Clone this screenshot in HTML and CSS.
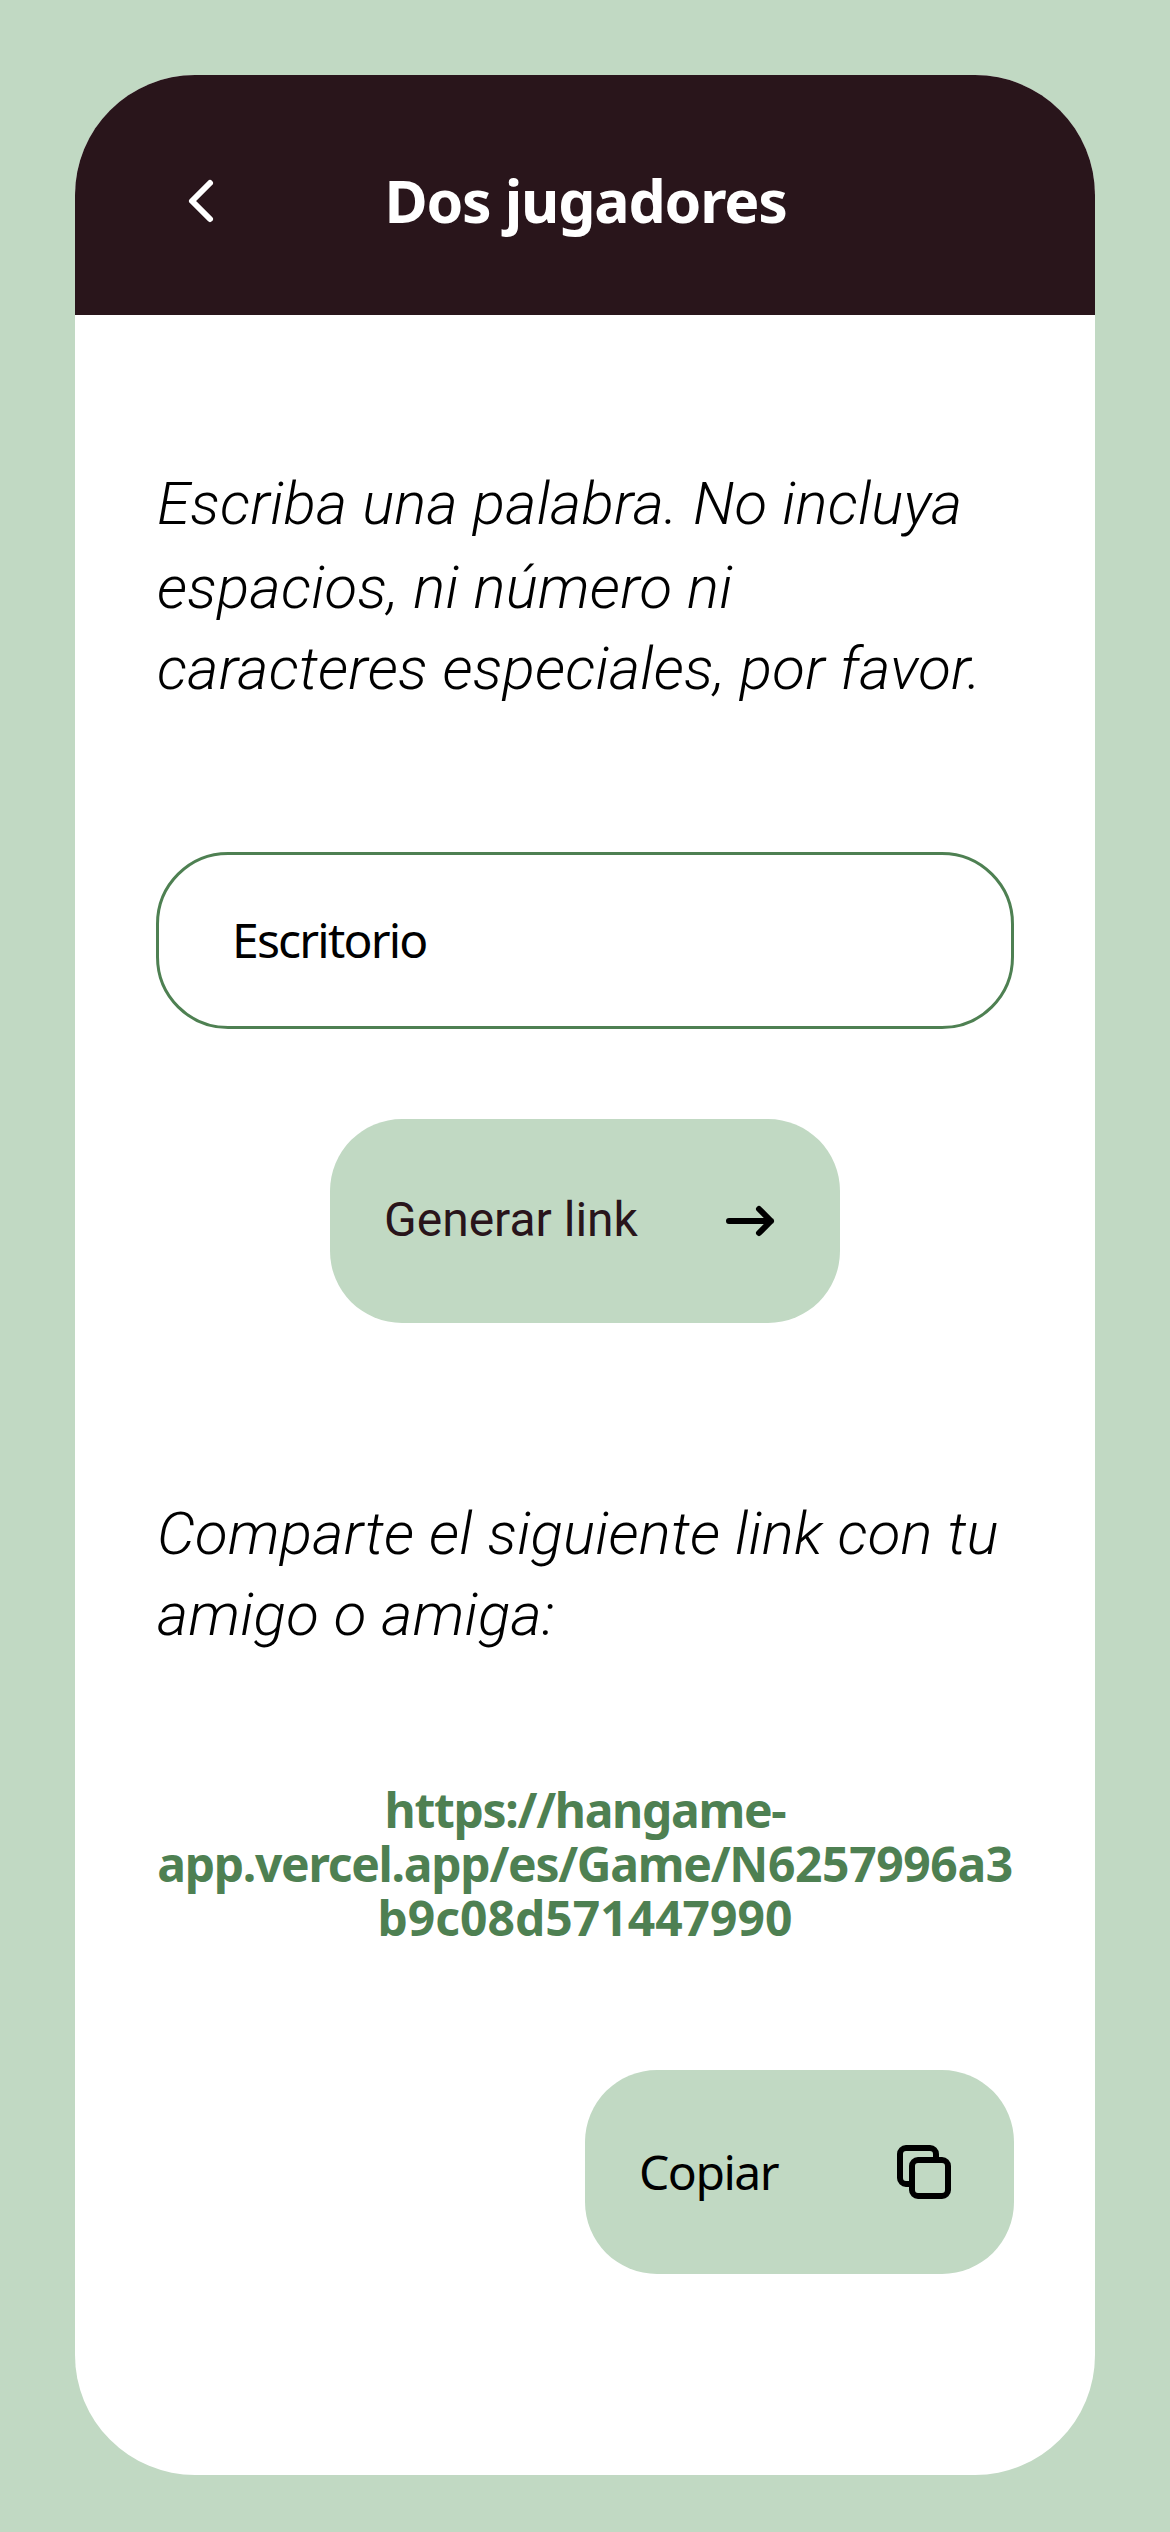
FILE: index.html
```html
<!DOCTYPE html>
<html lang="es">
<head>
<meta charset="utf-8">
<title>Dos jugadores</title>
<link rel="stylesheet" href="styles.css">
</head>
<body>
<main class="card">
  <header class="header">
    <svg class="icon back" viewBox="0 0 24 24"><path d="M15 6l-6 6l6 6"/></svg>
    <h1 class="title">Dos jugadores</h1>
  </header>
  <section class="content">
    <p class="hint hint-word"><span class="line line-tall">Escriba una palabra. No incluya</span> <span class="line">espacios, ni número ni</span> <span class="line">caracteres especiales, por favor.</span></p>
    <div class="field"><span class="field-text">Escritorio</span></div>
    <button class="button generate"><span class="generate-text">Generar link</span>
      <svg class="icon" viewBox="0 0 24 24"><path d="M5 12h14M15 16l4-4M15 8l4 4"/></svg>
    </button>
    <p class="hint hint-share"><span class="line">Comparte el siguiente link con tu</span> <span class="line">amigo o amiga:</span></p>
    <p class="link"><span class="url url-a">https://hangame-</span><span class="url url-b">app.vercel.app/es/Game/<span class="code">N6257996a3</span></span><span class="url url-c">b9c08d571447990</span></p>
    <button class="button copy"><span class="copy-text">Copiar</span>
      <svg class="icon" viewBox="0 0 24 24"><rect x="8" y="8" width="12" height="12" rx="2"/><path d="M16 8V6a2 2 0 0 0-2-2H6a2 2 0 0 0-2 2v8a2 2 0 0 0 2 2h2"/></svg>
    </button>
  </section>
</main>
</body>
</html>
```
FILE: styles.css
```css
* { box-sizing: border-box; }

body {
  margin: 0;
  padding: 75px;
  min-height: 2532px;
  background: #c1d9c3;
  color: #000;
  font-family: "Noto Sans", "Open Sans", sans-serif;
}

.card {
  height: 2400px;
  width: 1020px;
  border-radius: 120px;
  background: #fff;
  overflow: hidden;
}

.header {
  display: grid;
  grid-template-columns: 72px 1fr 72px;
  align-items: center;
  height: 240px;
  padding: 12px 90px 0;
  background: #29151b;
  color: #fff;
}

.icon {
  width: 72px;
  height: 72px;
  flex: none;
  fill: none;
  stroke: currentColor;
  stroke-width: 2;
  stroke-linecap: round;
  stroke-linejoin: round;
}

.title {
  margin: 0;
  padding: 0 0 2px 1px;
  text-align: center;
  font-size: 59px;
  line-height: 82px;
  font-weight: 700;
  white-space: nowrap;
  letter-spacing: -1.2px;
}

.content {
  display: flex;
  flex-direction: column;
  padding: 148px 81px 0;
}

.hint {
  margin: 0;
  padding-left: 1px;
  font-family: Roboto, sans-serif;
  font-size: 60px;
  font-weight: 300;
  font-style: italic;
  white-space: nowrap;
  letter-spacing: 0.24px;
}

.line { display: block; height: 81px; line-height: 81px; }
.line-tall { height: 84px; }

.field {
  height: 177px;
  margin-top: 143px;
  padding: 0 73px;
  border: 3px solid #4e8052;
  border-radius: 72px;
  font-size: 48px;
  line-height: 169px;
}

.field-text { letter-spacing: -1.8px; }
.copy-text { letter-spacing: -1.5px; }

.button {
  display: flex;
  align-items: center;
  justify-content: space-between;
  height: 204px;
  padding: 0 54px;
  border: 0;
  border-radius: 72px;
  background: #c1d9c3;
  color: #000;
  font: 400 48px/66px "Noto Sans", "Open Sans", sans-serif;
}

.generate {
  align-self: center;
  width: 510px;
  margin-top: 90px;
  font-family: Roboto, sans-serif;
}

.generate-text {
  padding-bottom: 2px;
  color: #29151b;
}

.hint-share { margin-top: 170px; }

.link {
  margin: 128px 0 0;
  color: #4e8052;
  font-size: 48px;
  line-height: 54px;
  font-weight: 700;
  white-space: nowrap;
  text-align: center;
}

.url { display: block; }
.url-a { letter-spacing: -1.3px; }
.url-b { letter-spacing: -1.28px; }
.code { letter-spacing: -0.4px; }
.url-c { letter-spacing: 0; }

.copy {
  align-self: flex-end;
  width: 429px;
  margin-top: 125px;
}
```
